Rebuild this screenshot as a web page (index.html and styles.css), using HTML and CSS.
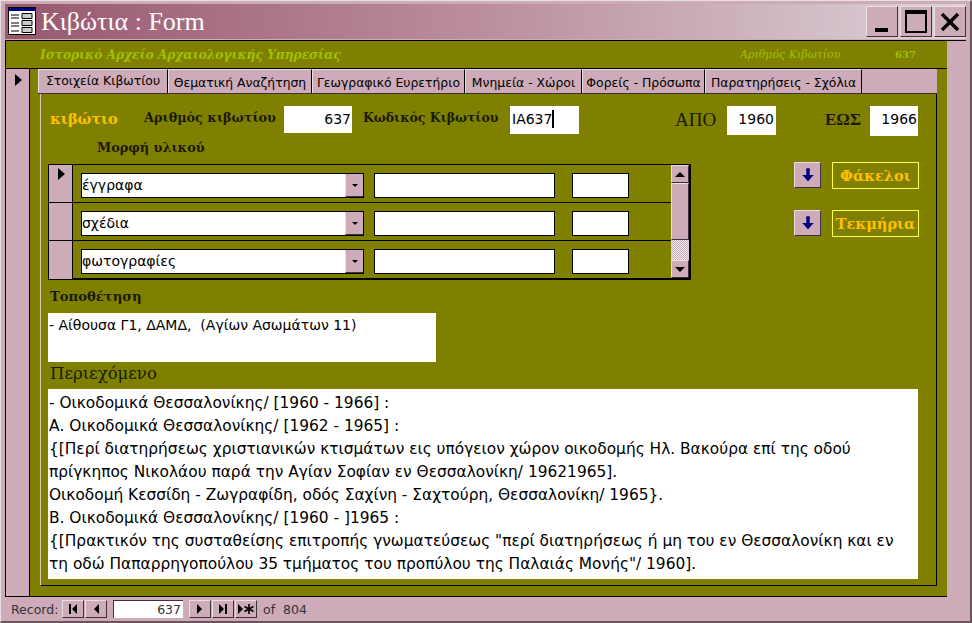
FILE: index.html
```html
<!DOCTYPE html>
<html lang="el">

<head>
    <meta charset="UTF-8">
    <meta name="viewport" content="width=device-width, initial-scale=1.0">
    <title>Κιβώτια : Form</title>
    <link rel="stylesheet" href="styles.css">
</head>

<body>
    <div class="window">
        <div class="titlebar">
            <svg class="app-icon" width="28" height="28" viewBox="0 0 28 28">
                <rect x="0.5" y="0.5" width="27" height="27" fill="#fff" stroke="#000" />
                <rect x="1" y="1" width="26" height="3" fill="#000080" />
                <path d="M3 8h8M3 11h8M3 16h8M3 19h8M3 24h8" stroke="#000" />
                <path d="M14 6.5h10v5h-10zM14 13.5h10v5h-10zM14 20.5h10v5h-10z" fill="#ccc" stroke="#000" />
            </svg>
            <div class="title">Κιβώτια : Form</div>
            <div class="win-buttons">
                <div class="win-btn"><span class="min-mark"></span></div>
                <div class="win-btn"><span class="max-mark"></span></div>
                <div class="win-btn">
                    <svg width="20" height="20" viewBox="0 0 20 20">
                        <path d="M2 2L18 18M18 2L2 18" stroke="#000" stroke-width="3.4" />
                    </svg>
                </div>
            </div>
        </div>

        <div class="form-wrap">
            <div class="form">
                <div class="form-header">
                    <div class="archive">Ιστορικό Αρχείο Αρχαιολογικής Υπηρεσίας</div>
                    <div class="box-label">Αριθμός Κιβωτίου</div>
                    <div class="box-num">637</div>
                </div>
                <div class="form-body">
                    <div class="selector">
                        <span class="arrow"></span>
                    </div>
                    <div class="detail">
                        <div class="tabs">
                            <div class="tab active">Στοιχεία Κιβωτίου</div>
                            <div class="tab t2">Θεματική Αναζήτηση</div>
                            <div class="tab t3">Γεωγραφικό Ευρετήριο</div>
                            <div class="tab t4">Μνημεία - Χώροι</div>
                            <div class="tab t5">Φορείς - Πρόσωπα</div>
                            <div class="tab t6">Παρατηρήσεις - Σχόλια</div>
                        </div>
                        <div class="panel">
                            <div class="top-row">
                                <div class="kivotio">κιβώτιο</div>
                                <div class="lbl lbl-num">Αριθμός κιβωτίου</div>
                                <div class="field f-num">637</div>
                                <div class="lbl lbl-code">Κωδικός Κιβωτίου</div>
                                <div class="field f-code">ΙΑ637<span class="caret"></span></div>
                                <div class="big-lbl lbl-from">ΑΠΟ</div>
                                <div class="field f-from">1960</div>
                                <div class="big-lbl lbl-to">ΕΩΣ</div>
                                <div class="field f-to">1966</div>
                            </div>
                            <div class="lbl morfi">Μορφή υλικού</div>

                            <div class="middle">
                                <div class="subform">
                                    <div class="rows">
                                        <div class="row">
                                            <div class="row-sel"><span class="arrow"></span></div>
                                            <div class="combo">
                                                <div class="combo-text">έγγραφα</div>
                                                <div class="combo-btn"><span class="tri-down"></span></div>
                                            </div>
                                            <div class="cell c2"></div>
                                            <div class="cell c3"></div>
                                        </div>
                                        <div class="row">
                                            <div class="row-sel"></div>
                                            <div class="combo">
                                                <div class="combo-text">σχέδια</div>
                                                <div class="combo-btn"><span class="tri-down"></span></div>
                                            </div>
                                            <div class="cell c2"></div>
                                            <div class="cell c3"></div>
                                        </div>
                                        <div class="row">
                                            <div class="row-sel"></div>
                                            <div class="combo">
                                                <div class="combo-text">φωτογραφίες</div>
                                                <div class="combo-btn"><span class="tri-down"></span></div>
                                            </div>
                                            <div class="cell c2"></div>
                                            <div class="cell c3"></div>
                                        </div>
                                    </div>
                                    <div class="scrollbar">
                                        <div class="sb-btn"><span class="tri-up"></span></div>
                                        <div class="sb-thumb"></div>
                                        <div class="sb-track"></div>
                                        <div class="sb-btn"><span class="tri-down big"></span></div>
                                    </div>
                                </div>
                                <div class="links">
                                    <div class="link-row">
                                        <div class="down-btn">
                                            <svg width="16" height="16" viewBox="0 0 14 14">
                                                <path d="M5.5 1h3v6h3.500L7 12.500L2 7h3.500z" fill="#000080" />
                                            </svg>
                                        </div>
                                        <div class="link-label">Φάκελοι</div>
                                    </div>
                                    <div class="link-row">
                                        <div class="down-btn">
                                            <svg width="16" height="16" viewBox="0 0 14 14">
                                                <path d="M5.5 1h3v6h3.500L7 12.500L2 7h3.500z" fill="#000080" />
                                            </svg>
                                        </div>
                                        <div class="link-label">Τεκμήρια</div>
                                    </div>
                                </div>
                            </div>

                            <div class="lbl topothetisi">Τοποθέτηση</div>
                            <div class="place">- Αίθουσα Γ1, ΔΑΜΔ,&nbsp; (Αγίων Ασωμάτων 11)</div>
                            <div class="contents-lbl">Περιεχόμενο</div>
                            <div class="contents">- Οικοδομικά Θεσσαλονίκης/ [1960 - 1966] :
Α. Οικοδομικά Θεσσαλονίκης/ [1962 - 1965] :
{[Περί διατηρήσεως χριστιανικών κτισμάτων εις υπόγειον χώρον οικοδομής Ηλ. Βακούρα επί της οδού
πρίγκηπος Νικολάου παρά την Αγίαν Σοφίαν εν Θεσσαλονίκη/ 19621965].
Οικοδομή Κεσσίδη - Ζωγραφίδη, οδός Σαχίνη - Σαχτούρη, Θεσσαλονίκη/ 1965}.
Β. Οικοδομικά Θεσσαλονίκης/ [1960 - ]1965 :
{[Πρακτικόν της συσταθείσης επιτροπής γνωματεύσεως "περί διατηρήσεως ή μη του εν Θεσσαλονίκη και εν
τη οδώ Παπαρρηγοπούλου 35 τμήματος του προπύλου της Παλαιάς Μονής"/ 1960].</div>
                        </div>
                    </div>
                </div>
            </div>
            <div class="side-strip"></div>
        </div>

        <div class="nav">
            <span class="nav-label">Record:</span>
            <div class="nav-btn">
                <svg width="12" height="12" viewBox="0 0 12 12"><path d="M2 1h2v10H2zM10 1v10L5 6z" /></svg>
            </div>
            <div class="nav-btn">
                <svg width="12" height="12" viewBox="0 0 12 12"><path d="M9 1v10L4 6z" /></svg>
            </div>
            <div class="nav-num">637</div>
            <div class="nav-btn">
                <svg width="12" height="12" viewBox="0 0 12 12"><path d="M3 1v10l5-5z" /></svg>
            </div>
            <div class="nav-btn">
                <svg width="12" height="12" viewBox="0 0 12 12"><path d="M2 1v10l5-5zM8 1h2v10H8z" /></svg>
            </div>
            <div class="nav-btn">
                <svg width="18" height="12" viewBox="0 0 18 12">
                    <path d="M1 1v10l5-5z" />
                    <path d="M12 1v10M7.500 3.500l9 5M16.500 3.500l-9 5" stroke="#000" stroke-width="1.600" />
                </svg>
            </div>
            <span class="nav-total">of&nbsp; 804</span>
        </div>
    </div>
</body>

</html>
```

FILE: styles.css
```css
* {
    margin: 0;
    padding: 0;
    box-sizing: border-box;
}

html,
body {
    width: 972px;
    height: 623px;
    overflow: hidden;
}

body {
    background-color: #cdabb9;
    font-family: "DejaVu Sans", sans-serif;
    color: #000;
}

.window {
    height: 623px;
    padding: 3px 4px 1px 4px;
    border-top: 1px solid #e8dfe2;
    border-left: 1px solid #e8dfe2;
    border-right: 2px solid #6d5560;
    border-bottom: 2px solid #6d5560;
    display: flex;
    flex-direction: column;
}

/* title bar */
.titlebar {
    height: 35px;
    background: linear-gradient(90deg, #98586f, #bb8e9f 50%, #dcd3d9);
    display: flex;
    align-items: center;
    padding-left: 3px;
}

.app-icon {
    flex: none;
    margin-top: -1px;
}

.title {
    margin-left: 5px;
    font-family: "Liberation Serif", serif;
    font-size: 26px;
    color: #fff;
    flex: 1;
}

.win-buttons {
    display: flex;
    gap: 2px;
}

.win-btn {
    width: 32px;
    height: 31px;
    background-color: #cdabb9;
    border: 1px solid;
    border-color: #eadfe4 #40303a #40303a #eadfe4;
    display: flex;
    align-items: center;
    justify-content: center;
}

.min-mark {
    width: 13px;
    height: 4px;
    background-color: #000;
    margin-top: 16px;
    margin-right: 2px;
}

.max-mark {
    width: 22px;
    height: 23px;
    border: 2px solid #000;
    border-top-width: 4px;
}

/* form */
.form-wrap {
    flex: 1;
    display: flex;
    min-height: 0;
    margin-top: 1px;
    border-top: 1px solid #000;
}

.form {
    width: 942px;
    border-left: 1px solid #000;
    display: flex;
    flex-direction: column;
}

.side-strip {
    flex: 1;
}

.form-header {
    height: 28px;
    flex: none;
    background-color: #808000;
    color: #a0c000;
    font-family: "DejaVu Serif", serif;
    display: flex;
    align-items: center;
    border-bottom: 1px solid #000;
}

.archive {
    margin-left: 34px;
    width: 700px;
    font-size: 12.2px;
    font-weight: bold;
    font-style: italic;
}

.box-label {
    width: 155px;
    font-size: 11px;
    font-style: italic;
}

.box-num {
    font-size: 10px;
    font-weight: bold;
}

.form-body {
    flex: 1;
    display: flex;
    min-height: 0;
    border-bottom: 1px solid #000;
}

.selector {
    width: 24px;
    background-color: #cdabb9;
    border-right: 1px solid #000;
    flex: none;
    padding: 5px 0 0 9px;
}

.arrow {
    display: block;
    width: 0;
    height: 0;
    border-left: 7px solid #000;
    border-top: 6px solid transparent;
    border-bottom: 6px solid transparent;
}

.detail {
    flex: 1;
    background-color: #808000;
    padding: 0 10px 10px 10px;
    display: flex;
    flex-direction: column;
}

.tabs {
    height: 25px;
    flex: none;
    margin-left: -2px;
    background-color: #cdabb9;
    display: flex;
    font-family: "DejaVu Sans", sans-serif;
    font-size: 12.400px;
    border-bottom: 1px solid #40303a;
}

.tab {
    height: 24px;
    padding-top: 5px;
    text-align: center;
    border-top: 1px solid #e8dfe2;
    border-left: 1px solid #e8dfe2;
    border-right: 1px solid #000;
    white-space: nowrap;
}

.tab.active {
    width: 130px;
    padding-top: 3px;
}

.t2 { width: 144px; }
.t3 { width: 153px; }
.t4 { width: 117px; }
.t5 { width: 123px; }
.t6 { width: 157px; }

.panel {
    flex: 1;
    border-left: 1px solid #dcc8ac;
    border-right: 1px solid #000;
    border-bottom: 1px solid #000;
    background-color: #808000;
    padding: 12px 16px 0 7px;
    min-height: 0;
}

.top-row {
    display: flex;
    align-items: flex-start;
    height: 30px;
}

.kivotio {
    width: 96px;
    padding: 4px 0 0 2px;
    font-family: "DejaVu Serif", serif;
    font-size: 14.500px;
    font-weight: bold;
    color: #ffc000;
}

.lbl {
    font-family: "DejaVu Serif", serif;
    font-size: 12.800px;
    font-weight: bold;
    color: #1a1a00;
}

.top-row .lbl {
    padding-top: 4px;
}

.lbl-num { width: 140px; }
.lbl-code { width: 147px; margin-left: 11px; font-size: 12.500px; }

.big-lbl {
    font-family: "Liberation Serif", serif;
    font-size: 19px;
    padding-top: 3px;
    color: #1a1a00;
}

.lbl-from { width: 52px; margin-left: 96px; }
.lbl-to { width: 45px; margin-left: 49px; font-size: 17px; font-weight: bold; padding-top: 4px; }

.field {
    background-color: #fff;
    height: 27px;
    font-size: 14px;
    line-height: 27px;
}

.f-num { width: 68px; text-align: right; padding-right: 1px; }
.f-code { width: 69px; padding-left: 2px; height: 28px; }
.f-from { width: 49px; text-align: right; padding-right: 2px; height: 29px; }
.f-to { width: 48px; text-align: right; padding-right: 1px; height: 30px; }

.caret {
    display: inline-block;
    width: 2px;
    height: 18px;
    background-color: #000;
    vertical-align: -4px;
}

.morfi {
    margin: 2px 0 4px 49px;
    height: 20px;
    padding-top: 2px;
}

.middle {
    display: flex;
    align-items: flex-start;
    height: 124px;
}

.subform {
    width: 643px;
    height: 116px;
    margin-top: 2px;
    border: 1px solid #000;
    border-bottom-width: 2px;
    border-right-width: 2px;
    display: flex;
}

.rows {
    flex: 1;
}

.row {
    height: 38px;
    display: flex;
    border-bottom: 1px solid #000;
}

.row:last-child {
    border-bottom: 0;
}

.row-sel {
    width: 24px;
    background-color: #cdabb9;
    border-right: 1px solid #000;
    flex: none;
    padding: 3px 0 0 9px;
}

.combo {
    width: 283px;
    height: 25px;
    margin: 8px 10px 0 8px;
    background-color: #fff;
    border: 1px solid #000;
    display: flex;
}

.combo-text {
    flex: 1;
    font-size: 14px;
    line-height: 23px;
}

.combo-btn {
    width: 18px;
    background-color: #cdabb9;
    border-left: 1px solid #e8dfe2;
    border-bottom: 1px solid #40303a;
    display: flex;
    align-items: center;
    justify-content: center;
}

.tri-down {
    width: 0;
    height: 0;
    border-top: 3px solid #000;
    border-left: 3px solid transparent;
    border-right: 3px solid transparent;
}

.tri-down.big,
.tri-up {
    border-left-width: 5px;
    border-right-width: 5px;
}

.tri-down.big {
    border-top-width: 5px;
}

.tri-up {
    width: 0;
    height: 0;
    border-bottom: 5px solid #000;
    border-left-style: solid;
    border-right-style: solid;
    border-left-color: transparent;
    border-right-color: transparent;
}

.cell {
    height: 25px;
    margin-top: 8px;
    background-color: #fff;
    border: 1px solid #000;
}

.c2 { width: 181px; margin-right: 17px; }
.c3 { width: 57px; }

.scrollbar {
    width: 18px;
    flex: none;
    display: flex;
    flex-direction: column;
}

.sb-btn {
    height: 18px;
    background-color: #cdabb9;
    border: 1px solid;
    border-color: #e8dfe2 #40303a #40303a #e8dfe2;
    display: flex;
    align-items: center;
    justify-content: center;
}

.sb-thumb {
    height: 57px;
    background-color: #cdabb9;
    border: 1px solid;
    border-color: #e8dfe2 #40303a #40303a #e8dfe2;
}

.sb-track {
    flex: 1;
    background-color: #e0d0d8;
    background-image: repeating-conic-gradient(#cdabb9 0 25%, #f0e8ec 0 50%);
    background-size: 2px 2px;
}

.links {
    margin-left: 103px;
    display: flex;
    flex-direction: column;
    gap: 21px;
}

.link-row {
    display: flex;
    align-items: flex-start;
    gap: 11px;
}

.down-btn {
    width: 27px;
    height: 26px;
    background-color: #cdabb9;
    border: 1px solid;
    border-color: #e8dfe2 #40303a #40303a #e8dfe2;
    display: flex;
    align-items: center;
    justify-content: center;
}

.link-label {
    width: 87px;
    height: 27px;
    border: 1px solid #ffff40;
    font-family: "DejaVu Serif", serif;
    font-size: 14.500px;
    font-weight: bold;
    line-height: 25px;
    color: #ffc000;
    text-align: center;
    white-space: nowrap;
}

.topothetisi {
    margin: 3px 0 0 2px;
    height: 24px;
    font-size: 13.200px;
}

.place {
    width: 388px;
    height: 49px;
    background-color: #fff;
    font-size: 14px;
    line-height: 24px;
    padding-left: 1px;
}

.contents-lbl {
    height: 27px;
    padding: 2px 0 0 2px;
    font-family: "DejaVu Serif", serif;
    font-size: 16.500px;
    color: #1a1a00;
}

.contents {
    width: 870px;
    height: 190px;
    background-color: #fff;
    font-size: 15.400px;
    line-height: 23px;
    white-space: pre;
    padding: 3px 0 0 1px;
}

/* record navigator */
.nav {
    height: 22px;
    margin-top: 1px;
    margin-left: 6px;
    display: flex;
    align-items: center;
    font-family: "DejaVu Sans", sans-serif;
    font-size: 12.500px;
    color: #333;
}

.nav-label {
    width: 51px;
}

.nav-btn {
    width: 22px;
    height: 18px;
    background-color: #cdabb9;
    border: 1px solid;
    border-color: #e8dfe2 #40303a #40303a #e8dfe2;
    margin-right: 1px;
    display: flex;
    align-items: center;
    justify-content: center;
}

.nav-num {
    width: 70px;
    height: 18px;
    margin: 0 6px 0 5px;
    background-color: #fff;
    text-align: right;
    padding-right: 2px;
    line-height: 18px;
    border-top: 1px solid #40303a;
    border-left: 1px solid #40303a;
}

.nav-total {
    margin-left: 5px;
}
```
